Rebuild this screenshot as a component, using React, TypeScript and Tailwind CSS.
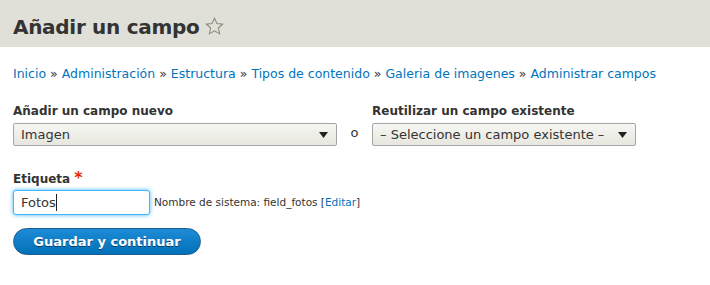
const crumbs = [
  'Inicio',
  'Administración',
  'Estructura',
  'Tipos de contenido',
  'Galeria de imagenes',
  'Administrar campos',
];

function Caret() {
  return (
    <svg width="9" height="6" viewBox="0 0 9 6" className="shrink-0">
      <path d="M0 0h9L4.5 6z" fill="#222" />
    </svg>
  );
}

function Star() {
  return (
    <svg width="19" height="18" viewBox="0 0 24 23" className="ml-[6px] mt-[-2px]">
      <path
        d="M12 1.5l3.1 6.9 7.4.7-5.6 5 1.7 7.4L12 17.7l-6.6 3.8 1.7-7.4-5.6-5 7.4-.7z"
        fill="none"
        stroke="#8a8a7a"
        strokeWidth="1.3"
        strokeLinejoin="miter"
      />
    </svg>
  );
}

export default function App() {
  return (
    <div className="min-h-[285px] w-[710px] bg-white text-[#333] font-['DejaVu_Sans',sans-serif]">
      <div className="h-[47px] bg-[#e0e0d8] flex items-center px-[13px] pt-[6px]">
        <h1 className="text-[20px] font-bold text-[#333] leading-none tracking-[-0.3px]">Añadir un campo</h1>
        <Star />
      </div>

      <nav className="px-[13px] pt-[19px] text-[12.5px] leading-[16px]">
        {crumbs.map((c, i) => (
          <span key={c}>
            {i > 0 && <span className="text-[#333] mx-[4px]">»</span>}
            <a className="text-[#0074bd]">{c}</a>
          </span>
        ))}
      </nav>

      <div className="flex items-end px-[13px] mt-[21px]">
        <div className="flex flex-col">
          <label className="text-[12px] font-bold leading-[16px] mb-[4px]">Añadir un campo nuevo</label>
          <div className="w-[324px] h-[23px] rounded-[2px] border border-[#a6a6a6] bg-gradient-to-b from-[#f6f6f3] to-[#e7e7df] flex items-center justify-between pl-[7px] pr-[8px]">
            <span className="text-[13px] text-[#333]">Imagen</span>
            <Caret />
          </div>
        </div>
        <span className="w-[35px] text-center text-[13px] mb-[4px]">o</span>
        <div className="flex flex-col">
          <label className="text-[12px] font-bold leading-[16px] mb-[4px]">Reutilizar un campo existente</label>
          <div className="w-[264px] h-[23px] rounded-[2px] border border-[#a6a6a6] bg-gradient-to-b from-[#f6f6f3] to-[#e7e7df] flex items-center justify-between pl-[7px] pr-[8px]">
            <span className="text-[13px] text-[#333] whitespace-nowrap">– Seleccione un campo existente –</span>
            <Caret />
          </div>
        </div>
      </div>

      <div className="px-[13px] mt-[25px]">
        <label className="text-[12px] font-bold leading-[16px] flex items-start">
          Etiqueta<span className="text-[#e32700] ml-[4px] text-[16px] leading-[14px]">*</span>
        </label>
        <div className="flex items-center mt-[3px]">
          <div className="w-[137px] h-[25px] rounded-[3px] border border-[#40b6ff] shadow-[0_0_4px_#40b6ff] bg-white flex items-center pl-[7px] text-[13px]">
            Fotos<span className="w-px h-[17px] bg-[#222]" />
          </div>
          <span className="ml-[4px] text-[10.5px] text-[#333]">
            Nombre de sistema: field_fotos [<a className="text-[#0074bd]">Editar</a>]
          </span>
        </div>
        <button className="mt-[13px] w-[188px] h-[27px] rounded-full border border-[#1e5c90] bg-gradient-to-b from-[#1d8bd6] to-[#0071b8] text-white text-[13px] font-bold [text-shadow:0_1px_hsla(0,0%,0%,0.5)]">
          Guardar y continuar
        </button>
      </div>
    </div>
  );
}
